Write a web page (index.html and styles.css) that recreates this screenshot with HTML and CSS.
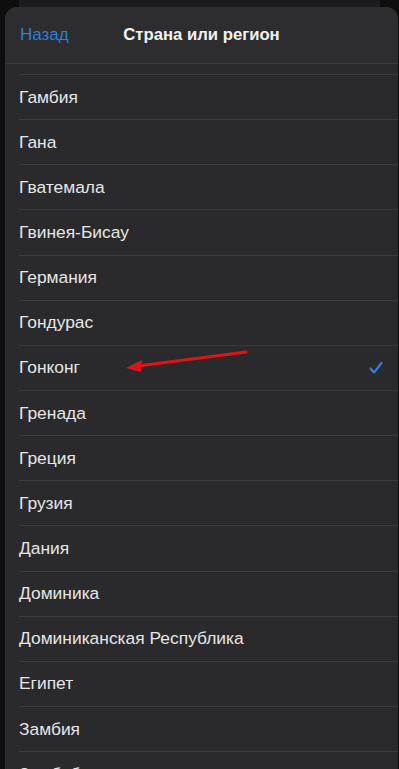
FILE: index.html
```html
<!DOCTYPE html>
<html lang="ru">
<head>
<meta charset="utf-8">
<link rel="stylesheet" href="styles.css">
</head>
<body>
<div class="page">
  <div class="behind"></div>
  <div class="sheet">
    <div class="header">
      <span class="back">Назад</span>
      <span class="title">Страна или регион</span>
      <span></span>
    </div>
    <ul class="list">
      <li class="row">Гамбия</li>
      <li class="row">Гана</li>
      <li class="row">Гватемала</li>
      <li class="row">Гвинея-Бисау</li>
      <li class="row">Германия</li>
      <li class="row">Гондурас</li>
      <li class="row selected">Гонконг
        <svg class="check" width="14" height="14" viewBox="0 0 14 14"><polyline points="1.5,7.5 5,11.5 12.5,2" fill="none" stroke="#2f80e0" stroke-width="2.2" stroke-linecap="round" stroke-linejoin="round"/></svg>
      </li>
      <li class="row">Гренада</li>
      <li class="row">Греция</li>
      <li class="row">Грузия</li>
      <li class="row">Дания</li>
      <li class="row">Доминика</li>
      <li class="row">Доминиканская Республика</li>
      <li class="row">Египет</li>
      <li class="row">Замбия</li>
      <li class="row">Зимбабве</li>
    </ul>
  </div>
  <svg class="arrow" width="399" height="769" viewBox="0 0 399 769">
    <line x1="246" y1="352" x2="138" y2="366" stroke="#e01414" stroke-width="3.2" stroke-linecap="round"/>
    <polygon points="126,368 142,360 141,372" fill="#e01414"/>
  </svg>
</div>
</body>
</html>
```
FILE: styles.css
```css
html, body {
  margin: 0;
  padding: 0;
  background: #0e0e0f;
}
.page {
  position: relative;
  width: 399px;
  height: 769px;
  overflow: hidden;
  display: flex;
  flex-direction: column;
  font-family: "Liberation Sans", "Noto Sans", sans-serif;
}
.behind {
  height: 7px;
  flex: none;
  margin: 0 19px;
  background: #1c1c1e;
}
.sheet {
  flex: 1;
  margin: 0 1px 0 5px;
  background: #2a2a2c;
  border-radius: 12px 12px 0 0;
  overflow: hidden;
}
.header {
  height: 56px;
  background: #2d2d2f;
  border-bottom: 1px solid #3a3a3c;
  display: grid;
  grid-template-columns: 1fr auto 1fr;
  align-items: center;
  padding: 0 15px;
}
.back {
  color: #2f7fd4;
  font-size: 17px;
}
.title {
  color: #f2f2f2;
  font-size: 16.7px;
  font-weight: bold;
}
.list {
  list-style: none;
  margin: 0;
  padding: 10px 0 0 14px;
}
.row {
  height: 44.15px;
  border-top: 1px solid #3a3a3c;
  display: flex;
  align-items: center;
  justify-content: space-between;
  padding-right: 15px;
  color: #e6e6e6;
  font-size: 17.4px;
}
.check {
  display: block;
}
.arrow {
  position: absolute;
  left: 0;
  top: 0;
  pointer-events: none;
}
```
